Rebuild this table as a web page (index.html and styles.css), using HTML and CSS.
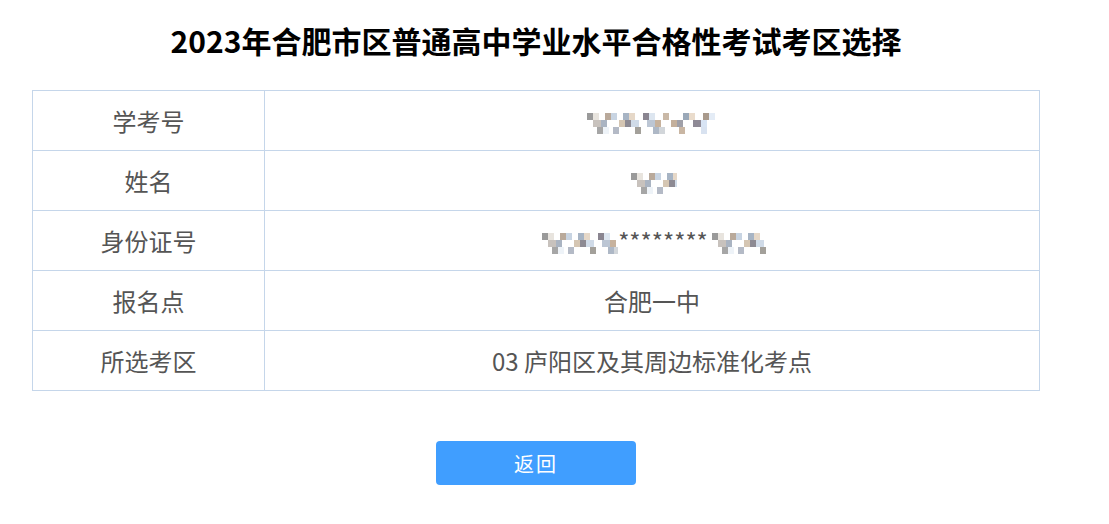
FILE: index.html
```html
<!DOCTYPE html>
<html lang="zh-CN">
<head>
  <meta charset="UTF-8">
  <title>考区选择</title>
  <link rel="stylesheet" href="styles.css">
</head>
<body>
  <div class="page">
    <h1 class="title">2023年合肥市区普通高中学业水平合格性考试考区选择</h1>

    <table class="info-table">
      <tr>
        <td class="label">学考号</td>
        <td class="value"><span class="blur">&nbsp;</span></td>
      </tr>
      <tr>
        <td class="label">姓名</td>
        <td class="value"><span class="blur short">&nbsp;</span></td>
      </tr>
      <tr>
        <td class="label">身份证号</td>
        <td class="value"><span class="blur mid">&nbsp;</span>********<span class="blur tail">&nbsp;</span></td>
      </tr>
      <tr>
        <td class="label">报名点</td>
        <td class="value">合肥一中</td>
      </tr>
      <tr>
        <td class="label">所选考区</td>
        <td class="value">03 庐阳区及其周边标准化考点</td>
      </tr>
    </table>

    <div class="actions">
      <button class="btn-back">返回</button>
    </div>
  </div>
</body>
</html>
```

FILE: styles.css
```css
body {
  margin: 0;
  background-color: #fff;
  font-family: "Noto Sans CJK SC", "Noto Sans", sans-serif;
}
.page {
  width: 1008px;
  margin-left: 32px;
  padding-top: 20px;
}
.title {
  margin: 0 0 30px;
  font-size: 30px;
  line-height: 40px;
  font-weight: bold;
  color: #000;
  text-align: center;
}
.info-table {
  width: 100%;
  border-collapse: collapse;
  color: #555;
  font-size: 24px;
}
.info-table td {
  height: 59px;
  padding: 0;
  border: 1px solid #c5d6ea;
  text-align: center;
  vertical-align: middle;
}
.info-table .label {
  width: 231px;
}
/* pixelated stand-in for masked values */
.blur {
  display: inline-block;
  width: 139px;
  height: 22px;
  vertical-align: middle;
  background:
    linear-gradient(90deg, transparent 0 4px, #9a9a9a 4px 10px, #e8e4de 10px 16px, transparent 16px 22px, #b9a99a 22px 28px, #c8d4e2 28px 34px, transparent 34px 40px, #a7b4c4 40px 46px, #e6d8c8 46px 52px, transparent 52px 60px, #8a8590 60px 66px, #dde6f0 66px 72px, transparent 72px 80px, #c9b8a6 80px 86px, transparent 86px 100px, #9aa8b8 100px 106px, #eadccc 106px 112px, transparent 112px 120px, #a99a8c 120px 126px, #e4ecf6 126px 132px, transparent 132px) 0 0 / 100% 7px no-repeat,
    linear-gradient(90deg, transparent 0 10px, #c8c2bd 10px 18px, #aab4c2 18px 24px, transparent 24px 36px, #d5c6b3 36px 42px, #8d8a93 42px 48px, #d0dbe8 48px 56px, transparent 56px 64px, #bcc6d4 64px 72px, #c7b29d 72px 78px, transparent 78px 88px, #c4b09c 88px 94px, #a0a0a8 94px 100px, transparent 100px 110px, #8f8a96 110px 118px, #d8e4f4 118px 124px, transparent 124px) 0 7px / 100% 7px no-repeat,
    linear-gradient(90deg, transparent 0 14px, #a6a6a6 14px 20px, #eef3f8 20px 26px, transparent 26px 30px, #b4bac6 30px 36px, transparent 36px 52px, #a3a09a 52px 58px, transparent 58px 70px, #aeb8c6 70px 76px, #d2d6da 76px 82px, transparent 82px 96px, #c9b6a3 96px 102px, transparent 102px 118px, #d8e2f0 118px 124px, transparent 124px) 0 14px / 100% 7px no-repeat;
}
.blur.short {
  width: 50px;
}
.blur.mid {
  width: 80px;
}
.blur.tail {
  width: 58px;
}
.actions {
  display: flex;
  justify-content: center;
  padding-top: 50px;
}
.btn-back {
  width: 200px;
  height: 44px;
  border: none;
  border-radius: 4px;
  background-color: #409eff;
  color: #fff;
  font-family: "Noto Sans CJK SC", sans-serif;
  font-size: 20px;
  letter-spacing: 2px;
  cursor: pointer;
}
```
